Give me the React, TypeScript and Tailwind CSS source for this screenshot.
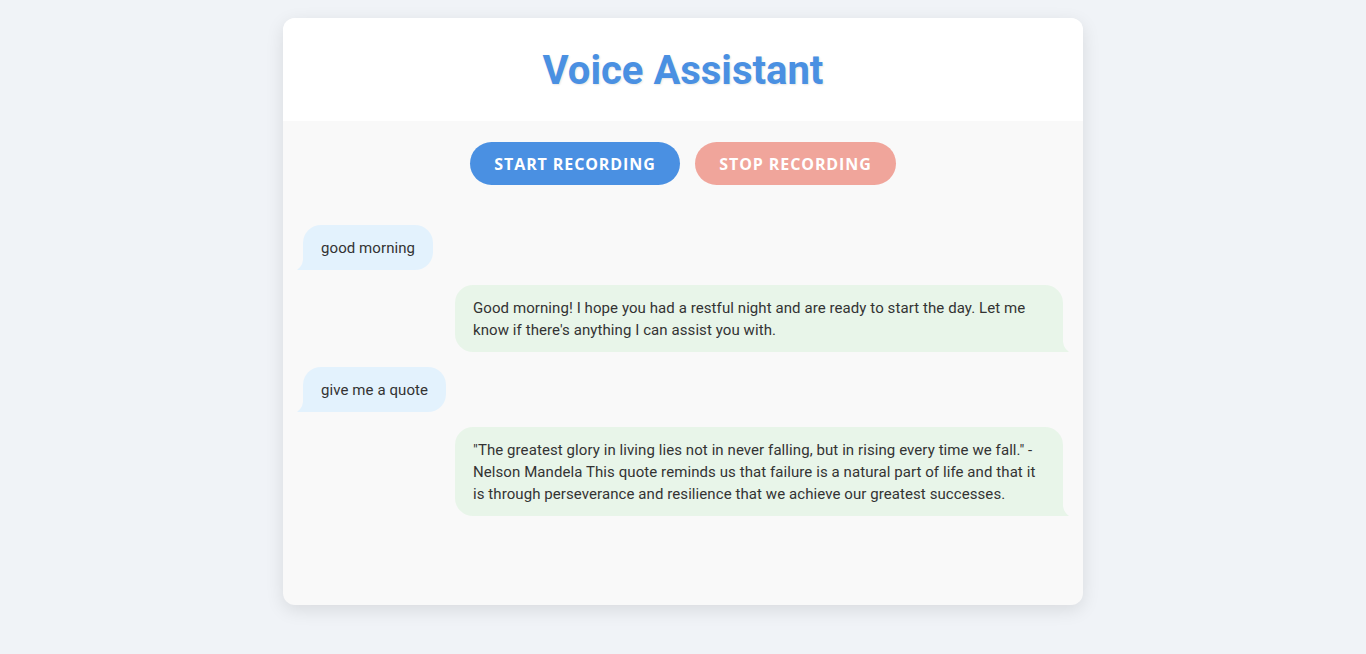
import React from "react";

type Msg = { from: "user" | "bot"; text: string };

const messages: Msg[] = [
  { from: "user", text: "good morning" },
  {
    from: "bot",
    text: "Good morning! I hope you had a restful night and are ready to start the day. Let me know if there's anything I can assist you with.",
  },
  { from: "user", text: "give me a quote" },
  {
    from: "bot",
    text: "\"The greatest glory in living lies not in never falling, but in rising every time we fall.\" - Nelson Mandela This quote reminds us that failure is a natural part of life and that it is through perseverance and resilience that we achieve our greatest successes.",
  },
];

function Bubble({ msg }: { msg: Msg }) {
  if (msg.from === "user") {
    return (
      <div className="flex justify-start">
        <div className="relative rounded-[18px] rounded-bl-none bg-[#e3f2fd] px-[18px] py-[11.5px] text-[15px] leading-[22px] tracking-[0.08px] text-[#333]">
          {/* tail */}
          <svg className="absolute -left-[6px] bottom-0" width="10" height="14" viewBox="0 0 10 14">
            <path d="M10 0 L10 14 L0 14 Q7 9 6 0 Z" fill="#e3f2fd" />
          </svg>
          {msg.text}
        </div>
      </div>
    );
  }
  return (
    <div className="flex justify-end">
      <div className="relative w-[80%] rounded-[18px] rounded-br-none bg-[#e8f5e9] px-[18px] py-[11.5px] text-[15px] leading-[22px] tracking-[0.08px] text-[#333]">
        <svg className="absolute -right-[6px] bottom-0" width="10" height="14" viewBox="0 0 10 14">
          <path d="M0 0 L0 14 L10 14 Q3 9 4 0 Z" fill="#e8f5e9" />
        </svg>
        {msg.text}
      </div>
    </div>
  );
}

export default function App() {
  return (
    <div className="min-h-screen bg-[#f0f3f7] pt-[18px]" style={{ fontFamily: "Roboto, sans-serif" }}>
      <div className="mx-auto w-[800px] overflow-hidden rounded-xl bg-[#f9f9f9] shadow-[0_5px_18px_rgba(0,0,0,0.1)]">
        {/* header */}
        <div className="flex h-[103px] items-center justify-center bg-white pt-[2px]">
          <h1 className="text-[40px] font-bold leading-none text-[#4a90e2] [text-shadow:1px_1px_2px_rgba(0,0,0,0.1)]">
            Voice Assistant
          </h1>
        </div>

        <div className="h-[484px] px-5 pt-[21px]">
          {/* controls */}
          <div className="flex justify-center gap-[15px] font-['Open_Sans',sans-serif]">
            <button className="h-[43px] w-[210px] rounded-full bg-[#4a90e2] text-[16px] font-bold tracking-[0.9px] text-white">
              START RECORDING
            </button>
            <button className="h-[43px] w-[201px] rounded-full bg-[#f0a59b] text-[16px] font-bold tracking-[0.9px] text-white">
              STOP RECORDING
            </button>
          </div>

          {/* chat */}
          <div className="mt-10 flex flex-col gap-[15px]">
            {messages.map((m, i) => (
              <Bubble key={i} msg={m} />
            ))}
          </div>
        </div>
      </div>
    </div>
  );
}
